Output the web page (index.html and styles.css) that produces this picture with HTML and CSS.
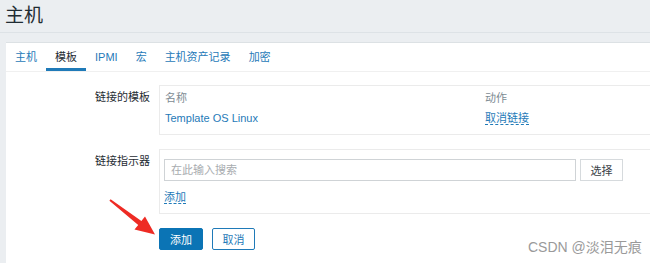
FILE: index.html
```html
<!DOCTYPE html>
<html lang="zh-CN">
<head>
  <meta charset="UTF-8" />
  <title>主机</title>
  <link rel="stylesheet" href="styles.css">
</head>
<body>
  <header class="page-header">
    <h1>主机</h1>
  </header>

  <div class="wrapper">
    <div class="panel">
      <ul class="tabs">
        <li><a>主机</a></li>
        <li class="active"><a>模板</a></li>
        <li><a>IPMI</a></li>
        <li><a>宏</a></li>
        <li><a>主机资产记录</a></li>
        <li><a>加密</a></li>
      </ul>

      <form class="form-grid">
        <label class="form-label">链接的模板</label>
        <div class="form-field">
          <table class="linked">
            <thead>
              <tr><th class="col-name">名称</th><th>动作</th></tr>
            </thead>
            <tbody>
              <tr>
                <td><a class="link">Template OS Linux</a></td>
                <td><a class="link dashed">取消链接</a></td>
              </tr>
            </tbody>
          </table>
        </div>

        <label class="form-label">链接指示器</label>
        <div class="form-field field-pad">
          <div class="multiselect">
            <input type="text" placeholder="在此输入搜索">
            <button type="button" class="btn-grey">选择</button>
          </div>
          <div class="add-row"><a class="link dashed">添加</a></div>
        </div>

        <div></div>
        <div class="form-actions">
          <button type="button" class="btn-primary">添加</button>
          <button type="button" class="btn-alt">取消</button>
        </div>
      </form>
    </div>
  </div>

  <svg class="arrow" width="650" height="263" viewBox="0 0 650 263">
    <polygon points="110.6,199.2 141.4,221 145,216.5 155,234.5 134.5,229.6 138.2,225.1 109.4,200.8" fill="#ee2b24" />
  </svg>

  <div class="watermark">CSDN @淡泪无痕</div>
</body>
</html>
```

FILE: styles.css
```css
html, body {
  height: 100%;
}

body {
  margin: 0;
  background: #ebeef1;
  font-family: "Liberation Sans", "Noto Sans CJK SC", sans-serif;
  font-size: 11px;
  color: #1f2c33;
  overflow: hidden;
  position: relative;
  display: flex;
  flex-direction: column;
}

.page-header {
  height: 32px;
  border-bottom: 1px solid #dde2e6;
}

.page-header h1 {
  margin: 0;
  padding: 3px 0 0 5px;
  font-size: 19px;
  font-weight: normal;
  line-height: 26px;
  color: #1f2c33;
}

.wrapper {
  flex: 1;
  display: flex;
  flex-direction: column;
  padding: 9px 0 0 6px;
}

.panel {
  flex: 1;
  background: #fff;
  border-top: 1px solid #dce1e4;
}

.tabs {
  list-style: none;
  margin: 0;
  padding: 0;
  display: flex;
  border-bottom: 1px solid #f0f0f0;
}

.tabs a {
  display: block;
  padding: 3px 9px 0;
  line-height: 22px;
  border-bottom: 3px solid transparent;
  color: #1f7ab8;
}

.tabs .active a {
  color: #1f2c33;
  border-bottom-color: #1f7ab8;
}

.form-grid {
  display: grid;
  grid-template-columns: 144px 1fr;
  column-gap: 9px;
  row-gap: 14px;
  padding-top: 13px;
}

.form-label {
  text-align: right;
  padding-top: 4px;
  line-height: 16px;
}

/* boxes run on past the right edge, so no right border */
.form-field {
  border: 1px solid #ebebeb;
  border-right: 0;
  padding: 4px 5px 8px;
}

.field-pad {
  padding: 9px 5px 8px 4px;
}

.linked {
  border-collapse: collapse;
  line-height: 16px;
}

.linked th {
  font-weight: normal;
  text-align: left;
  color: #7d8b93;
  padding: 0;
}

.linked .col-name {
  width: 320px;
}

.linked td {
  padding: 4px 0 0;
}

.link {
  color: #1f7ab8;
}

.dashed {
  border-bottom: 1px dashed #1f7ab8;
}

.multiselect {
  display: flex;
  gap: 4px;
}

.multiselect input {
  width: 412px;
  height: 22px;
  box-sizing: border-box;
  margin: 0;
  border: 1px solid #cfd3d6;
  padding: 0 6px;
  font: inherit;
  font-size: 11px;
}

.multiselect input::placeholder {
  color: #a8acaf;
}

.btn-grey {
  width: 43px;
  height: 22px;
  background: #fff;
  border: 1px solid #d6dadd;
  color: #3b4247;
  font: inherit;
  padding: 0;
}

.add-row {
  margin-top: 8px;
  line-height: 16px;
}

.form-actions {
  display: flex;
  gap: 9px;
}

.form-actions button {
  height: 22px;
  font: inherit;
  padding: 0;
  border-radius: 2px;
}

.btn-primary {
  width: 44px;
  background: #0b74b5;
  border: 1px solid #0b74b5;
  color: #fff;
}

.btn-alt {
  width: 43px;
  background: #fff;
  border: 1px solid #1f7ab8;
  color: #1f7ab8;
}

.arrow {
  position: absolute;
  top: 0;
  left: 0;
  pointer-events: none;
}

.watermark {
  position: absolute;
  left: 528px;
  top: 238px;
  font-size: 14px;
  line-height: 18px;
  color: #9a9a9a;
}
```
